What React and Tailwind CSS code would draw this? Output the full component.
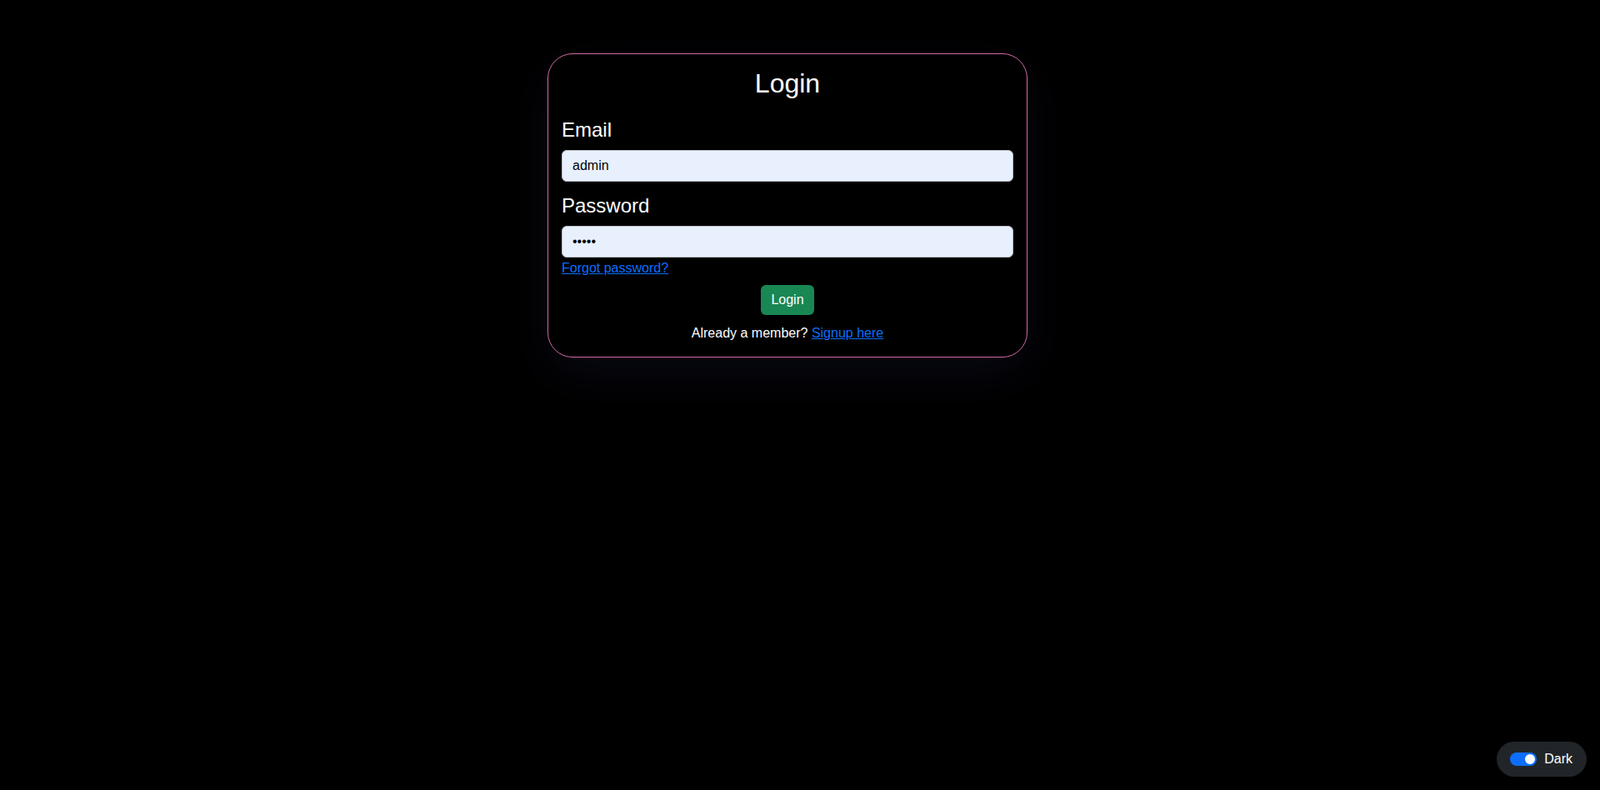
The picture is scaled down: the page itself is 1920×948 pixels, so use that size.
export default function App() {
  return (
    <div className="min-h-screen bg-black text-white font-['Liberation_Sans',Arial,sans-serif]">
      {/* Login card */}
      <div className="flex justify-center pt-16 pr-[30px]">
        <div className="w-[576px] border border-[#d26aa5] rounded-[30px] p-4 bg-black shadow-[0_20px_60px_rgba(28,28,64,0.3)]">
          <h2 className="text-[32px] leading-[38.4px] text-center mb-[23px]">Login</h2>
          <form onSubmit={(e) => e.preventDefault()}>
            <label htmlFor="email" className="block text-2xl leading-[28.8px] mb-[9px]">
              Email
            </label>
            <input
              id="email"
              type="text"
              defaultValue="admin"
              className="block w-full px-3 py-1.5 text-base leading-6 rounded-md border border-[#b9bec5] bg-[#e8f0fe] text-black outline-none"
            />
            <label htmlFor="password" className="block text-2xl leading-[28.8px] mt-[15px] mb-[9px]">
              Password
            </label>
            <input
              id="password"
              type="password"
              defaultValue="admin"
              className="block w-full px-3 py-1.5 text-base leading-6 rounded-md border border-[#b9bec5] bg-[#e8f0fe] text-black outline-none"
            />
            <a href="#" className="inline-block text-base leading-6 mt-px text-[#0d6efd] underline">
              Forgot password?
            </a>
            <div className="flex justify-center mt-2">
              <button type="submit" className="px-3 py-1.5 text-base leading-6 rounded-md bg-[#198754] text-white">
                Login
              </button>
            </div>
            <p className="text-center text-base leading-6 mt-[10px]">
              Already a member?{" "}
              <a href="#" className="text-[#0d6efd] underline">
                Signup here
              </a>
            </p>
          </form>
        </div>
      </div>

      {/* Theme toggle */}
      <div className="fixed bottom-4 right-4 h-[42px] flex items-center gap-[9px] pl-4 pr-[17px] rounded-full bg-[#212529] text-white text-base">
        <span className="w-8 h-4 rounded-full bg-[#0d6efd] flex items-center justify-end pr-[2px]">
          <span className="w-3 h-3 rounded-full bg-white" />
        </span>
        <span>Dark</span>
      </div>
    </div>
  )
}
